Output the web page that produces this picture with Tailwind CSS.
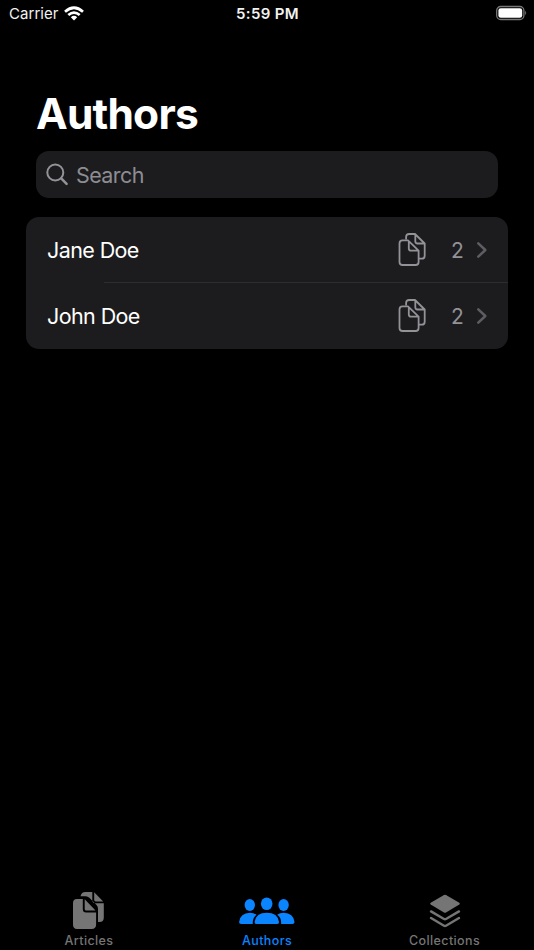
<!DOCTYPE html>
<html lang="en">
<head>
<meta charset="utf-8">
<title>Authors</title>
<script src="https://cdn.jsdelivr.net/npm/@tailwindcss/browser@4"></script>
</head>
<body class="bg-black">
<svg class="hidden">
  <symbol id="docs" viewBox="0 0 30 36">
    <g fill="none" stroke="#929297" stroke-width="1.8" stroke-linejoin="round">
      <path d="M8.1 7.5V5Q8.1 2 11.1 2H17L26.7 11.5V23.7Q26.7 26.7 23.7 26.7H20.8M17.3 2V9.3Q17.3 11.5 19.5 11.5H26.7"/>
      <path d="M4.5 8.4H10L20.6 18.6V30Q20.6 33 17.6 33H4.5Q1.5 33 1.5 30V11.4Q1.5 8.4 4.5 8.4ZM10.8 8.8V16.4Q10.8 18.6 13 18.6H20.6"/>
    </g>
  </symbol>
  <symbol id="chevron" viewBox="0 0 12 18"><path d="M2.3 2.3L9.3 9L2.3 15.7" fill="none" stroke="#5e5e62" stroke-width="2.5" stroke-linecap="round" stroke-linejoin="round"/></symbol>
</svg>
<div class="flex h-[950px] w-[534px] flex-col overflow-hidden bg-black font-[Inter,sans-serif] text-white">
  <header class="grid h-7 grid-cols-3 items-center pr-[7px] pl-[9px] text-[15px] leading-7 text-[#f2f2f2]">
    <div class="flex items-center gap-[6px]">
      <span class="w-[49px] tracking-[0.05px]">Carrier</span>
      <svg class="mb-[2px] h-[15px] w-[20px]" viewBox="0 0 20 15" fill="none" stroke="#fff" stroke-width="2.7"><path d="M1 5.7Q10-2.2 19 5.7M4.3 9.1Q10 4.1 15.7 9.1"/><path d="M6.8 11.2Q10 8.5 13.2 11.2L10 14.4Z" fill="#fff" stroke="none"/></svg>
    </div>
    <span class="pr-[1px] text-center font-semibold tracking-[0.35px]">5:59 PM</span>
    <svg class="mb-[2px] h-4 w-[31px] justify-self-end" viewBox="0 0 31 16"><rect x=".7" y="1.5" width="27.2" height="13" rx="4" fill="none" stroke="#777" stroke-width="1.3"/><rect x="2.4" y="3.2" width="23.8" height="9.6" rx="2.3" fill="#fff"/><path d="M29.2 5.8Q31.2 8 29.2 10.2Z" fill="#777"/></svg>
  </header>
  <main class="flex flex-1 flex-col px-[26px] pt-[59px]">
    <h1 class="h-[64px] pl-[10px] text-[42.5px] leading-[53px] font-bold tracking-[-0.8px]">Authors</h1>
    <div class="mx-[10px] flex h-[47px] items-center gap-[7px] rounded-[13px] bg-[#1c1c1e] pl-[10px] text-[21.5px] text-[#8d8d93]">
      <svg class="h-[23px] w-[23px]" viewBox="0 0 23 23" fill="none" stroke="#929297" stroke-width="2" stroke-linecap="round"><circle cx="9.3" cy="9.5" r="8"/><path d="M15.2 15.4L20.6 20.8" stroke-width="2.5"/></svg>
      <span class="pt-[2px] tracking-[-0.6px]">Search</span>
    </div>
    <ul class="mt-[19px] h-[132px] rounded-[13px] bg-[#1c1c1e] text-[21.5px]">
      <li class="flex h-[66px] items-center pr-[20px] pl-[21px]">
        <span class="flex-1 tracking-[-0.6px]">Jane Doe</span><svg class="h-9 w-[30px]"><use href="#docs"/></svg><span class="ml-[23px] w-[12px] pt-[2px] text-[21px] text-[#929297]">2</span><svg class="ml-[13px] h-[18px] w-[12px]"><use href="#chevron"/></svg>
      </li>
      <li class="relative flex h-[66px] items-center pr-[20px] pl-[21px]">
        <div class="absolute top-[-1px] right-0 left-[78px] h-px bg-[#2d2d30]"></div>
        <span class="flex-1 tracking-[-0.6px]">John Doe</span><svg class="h-9 w-[30px]"><use href="#docs"/></svg><span class="ml-[23px] w-[12px] pt-[2px] text-[21px] text-[#929297]">2</span><svg class="ml-[13px] h-[18px] w-[12px]"><use href="#chevron"/></svg>
      </li>
    </ul>
  </main>
  <nav class="grid h-[62px] grid-cols-3 text-[12.5px] font-medium tracking-[0.4px] text-[#757575]">
    <div class="flex flex-col items-center">
      <svg class="mt-[3px] h-10 w-[34px]" viewBox="0 0 34 40" fill="currentColor">
        <path d="M8.5 5.3Q9.3 1 13.5 1H20.3V9Q20.3 12.3 23.5 12.3H31.8V26.5Q31.8 31 27.4 31H26V17.8Q26 15.5 24.3 13.8L17.3 6.8Q15.8 5.3 13.8 5.3ZM22.2 1.2L31.2 10.4H23.7Q22.2 10.4 22.2 9Z"/>
        <path d="M5 8H10.8V18Q10.8 21.5 14.1 21.5H24.1V33.6Q24.1 38 19.6 38H5Q1 38 1 33.6V12.2Q1 8 5 8ZM12.7 8.2L23.5 19.6H14.3Q12.7 19.6 12.7 18Z"/>
      </svg>
      <span class="pt-px leading-[18px]">Articles</span>
    </div>
    <div class="flex flex-col items-center text-[#0a84ff]">
      <svg class="mt-[3px] h-10 w-[56px]" viewBox="0 0 56 40" fill="currentColor">
        <ellipse cx="10.8" cy="14" rx="5.2" ry="5.9"/><ellipse cx="27.7" cy="12.8" rx="5.8" ry="6.3"/><ellipse cx="44.6" cy="14" rx="5.2" ry="5.9"/>
        <path d="M2.2 33Q0 33 .1 31Q1.2 22 11 21.8Q15 21.8 17.6 23.8Q13.3 27 13.8 33ZM53.4 33Q55.6 33 55.5 31Q54.4 22 44.8 21.8Q40.8 21.8 38.2 23.8Q42.7 27 42.1 33ZM17.8 33Q15.5 33 15.6 31Q16.8 21.8 27.8 21.8Q38.8 21.8 40 31Q40.1 33 37.8 33Z"/>
      </svg>
      <span class="pt-px leading-[18px]">Authors</span>
    </div>
    <div class="flex flex-col items-center pr-[1px]">
      <svg class="mt-[3px] h-10 w-[32px]" viewBox="0 0 32 40">
        <path d="M15 3.9Q16 3.4 17 3.9L30.3 11.7Q31.5 12.7 30.3 13.6L17 21.5Q16 22 15 21.5L1.7 13.6Q.5 12.7 1.7 11.7Z" fill="currentColor"/>
        <path d="M2 20.4L15 28Q16 28.5 17 28L30 20.4M2 27L15 34.7Q16 35.2 17 34.7L30 27" fill="none" stroke="currentColor" stroke-width="2.4" stroke-linecap="round"/>
      </svg>
      <span class="pt-px leading-[18px]">Collections</span>
    </div>
  </nav>
</div>
</body>
</html>
